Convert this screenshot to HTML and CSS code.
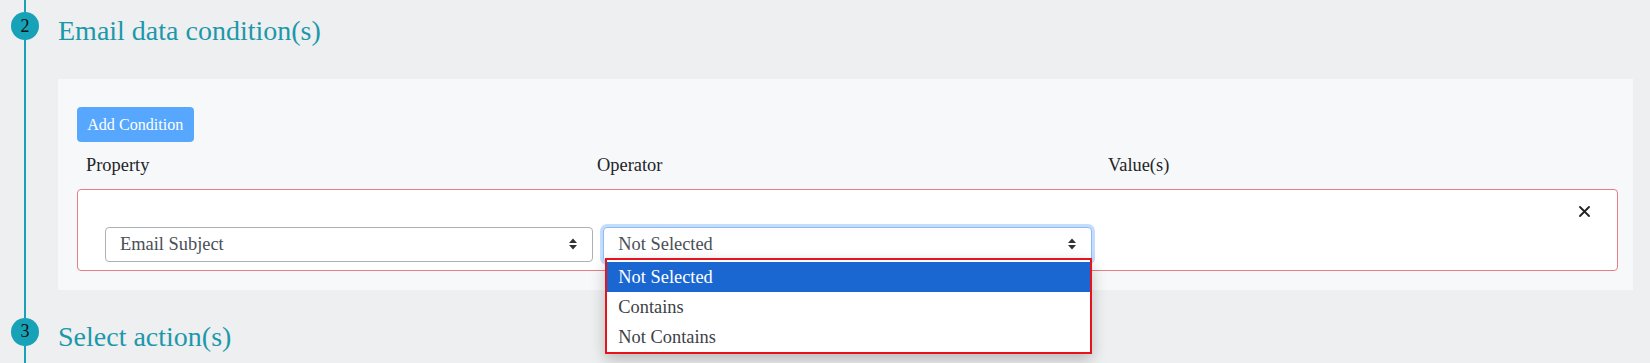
FILE: index.html
```html
<!DOCTYPE html>
<html lang="en">

<head>
    <meta charset="UTF-8">
    <meta name="viewport" content="width=device-width, initial-scale=1.0">
    <title>Email Rule</title>
    <link rel="stylesheet" href="styles.css">
</head>

<body>
    <div class="steps">
        <section class="step">
            <div class="step-rail"><span class="step-num">2</span></div>
            <div class="step-body">
                <h2 class="step-title">Email data condition(s)</h2>
                <div class="panel">
                    <div class="panel-actions">
                        <button class="btn-add" disabled>Add Condition</button>
                    </div>
                    <div class="cond-labels">
                        <span>Property</span>
                        <span>Operator</span>
                        <span>Value(s)</span>
                    </div>
                    <div class="cond-row">
                        <div class="cond-head">
                            <button class="btn-close" aria-label="Remove">
                                <svg width="11" height="11" viewBox="0 0 11 11">
                                    <path d="M1 1L10 10M10 1L1 10" stroke="#222" stroke-width="1.8" stroke-linecap="round" />
                                </svg>
                            </button>
                        </div>
                        <div class="cond-fields">
                            <div class="select">
                                <span>Email Subject</span>
                                <svg class="caret" width="8" height="12" viewBox="0 0 8 12">
                                    <path d="M0 5L4 0.5L8 5Z M0 7L4 11.5L8 7Z" fill="#333" />
                                </svg>
                            </div>
                            <div class="select-wrap">
                                <div class="select focused">
                                    <span>Not Selected</span>
                                    <svg class="caret" width="8" height="12" viewBox="0 0 8 12">
                                        <path d="M0 5L4 0.5L8 5Z M0 7L4 11.5L8 7Z" fill="#333" />
                                    </svg>
                                </div>
                                <ul class="dropdown">
                                    <li class="active">Not Selected</li>
                                    <li>Contains</li>
                                    <li>Not Contains</li>
                                </ul>
                            </div>
                            <div class="value-col"></div>
                        </div>
                    </div>
                </div>
            </div>
        </section>

        <section class="step step-last">
            <div class="step-rail"><span class="step-num">3</span></div>
            <div class="step-body">
                <h2 class="step-title">Select action(s)</h2>
            </div>
        </section>
    </div>
</body>

</html>
```

FILE: styles.css
```css
body {
    margin: 0;
    padding: 0;
    background-color: #eeeff1;
    font-family: "Liberation Serif", "Times New Roman", Times, serif;
    color: #212529;
}

.step {
    display: grid;
    grid-template-columns: 50px 1fr;
    column-gap: 8px;
}

.step-last {
    min-height: 120px;
}

.step-rail {
    background: linear-gradient(#17a2b8, #17a2b8) center / 2px 100% no-repeat;
}

.step-num {
    display: flex;
    align-items: center;
    justify-content: center;
    width: 28px;
    height: 28px;
    margin: 12px auto 0;
    border-radius: 50%;
    background-color: #17a2b8;
    color: #111;
    font-size: 18px;
}

.step-body {
    padding: 14px 17px 16px 0;
}

.step-title {
    margin: 0;
    font-size: 28px;
    line-height: 34px;
    font-weight: normal;
    color: #1c98ab;
}

.panel {
    margin-top: 31px;
    background-color: #f7f8fa;
    padding: 28px 15px 19px 19px;
}

.panel-actions {
    display: flex;
}

.btn-add {
    font-family: inherit;
    font-size: 16.1px;
    line-height: 1.5;
    padding: 4.6px 9.2px;
    color: #fff;
    background-color: #56a7fd;
    border: 1px solid #56a7fd;
    border-radius: 3.5px;
}

.cond-labels {
    display: grid;
    grid-template-columns: 511px 511px 1fr;
    padding-left: 9px;
    margin: 9.5px 0;
    font-size: 18.4px;
    line-height: 27.6px;
}

.cond-row {
    background-color: #fff;
    border: 1px solid #e67d87;
    border-radius: 4px;
    padding: 0 27px 8px;
}

.cond-head {
    display: flex;
    justify-content: flex-end;
    align-items: center;
    height: 37px;
    padding-top: 6px;
    box-sizing: border-box;
}

.btn-close {
    display: flex;
    padding: 0;
    border: none;
    background: none;
}

.cond-fields {
    display: grid;
    grid-template-columns: repeat(3, 1fr);
    column-gap: 10px;
}

.select {
    display: flex;
    align-items: center;
    justify-content: space-between;
    height: 35px;
    box-sizing: border-box;
    padding: 0 15px 0 14px;
    background-color: #fff;
    border: 1px solid #adb0b5;
    border-radius: 4px;
    font-size: 18.4px;
    color: #495057;
}

.select.focused {
    border-color: #8cbcf8;
    box-shadow: 0 0 0 3px #c4ddfc;
}

.select-wrap {
    position: relative;
}

.dropdown {
    position: absolute;
    top: 31px;
    left: 2px;
    right: 0;
    z-index: 5;
    list-style: none;
    margin: 0;
    padding: 2px 0 0;
    background-color: #fff;
    border: 2px solid #e5131d;
    box-shadow: 0 6px 14px rgba(0, 0, 0, 0.22);
}

.dropdown li {
    height: 30px;
    line-height: 30px;
    padding-left: 11px;
    font-size: 18.4px;
    color: #3d4147;
}

.dropdown li.active {
    background-color: #1a67d2;
    color: #fff;
}
```
